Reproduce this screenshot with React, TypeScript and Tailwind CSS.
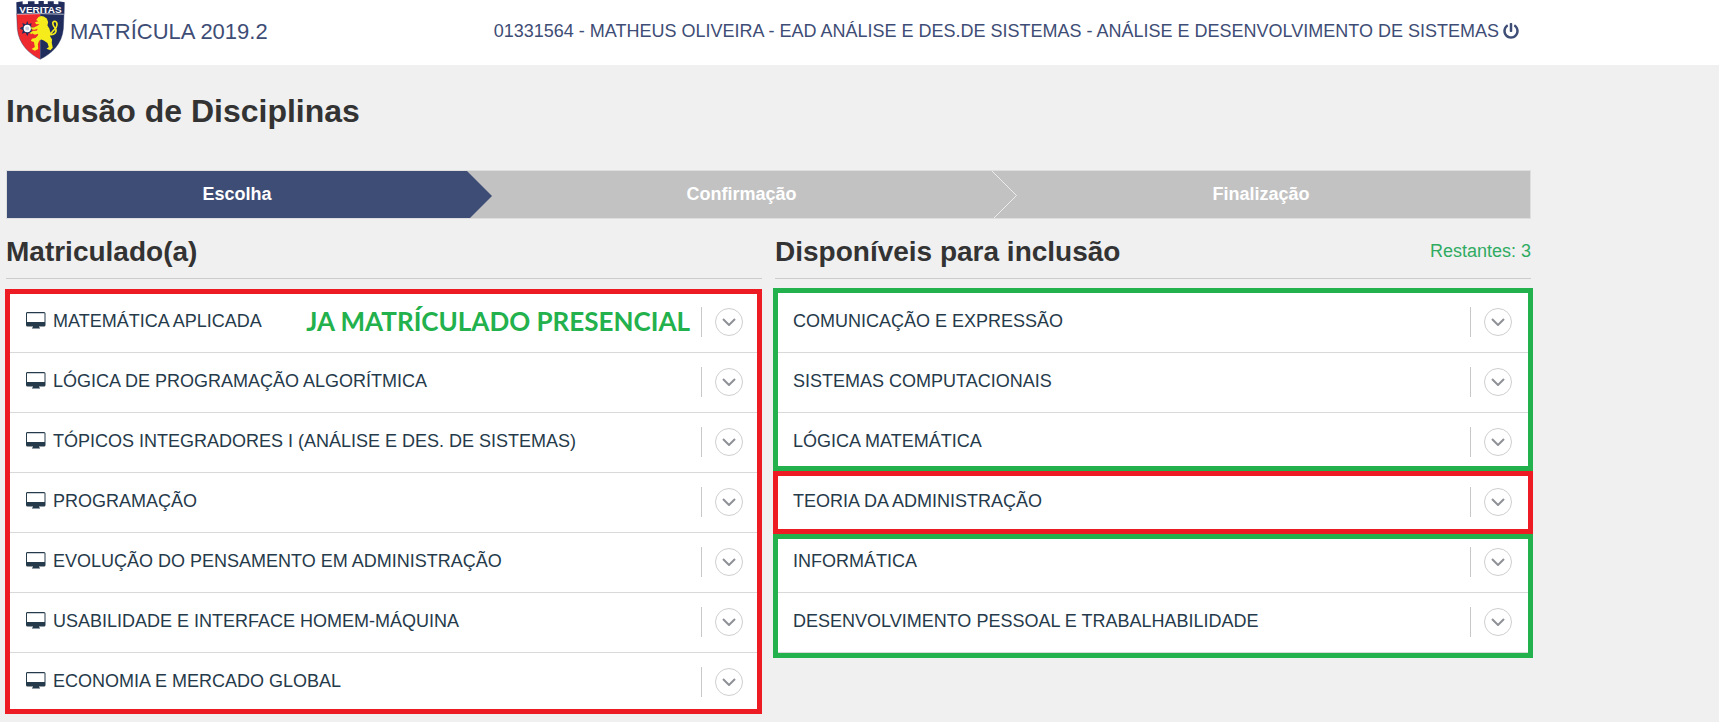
import { FaPowerOff } from "react-icons/fa";

type Frame = { color: string; place: string };
type Group = { frame: Frame; items: Course[] };
type Course = { name: string; online?: boolean; note?: string };

const RED = "border-[#ed1c24]";
const GREEN = "border-[#22b14c]";

const enrolled: Group[] = [
  {
    frame: { color: RED, place: "-top-1 -bottom-px -left-px right-0" },
    items: [
      { name: "MATEMÁTICA APLICADA", online: true, note: "JA MATRÍCULADO PRESENCIAL" },
      { name: "LÓGICA DE PROGRAMAÇÃO ALGORÍTMICA", online: true },
      { name: "TÓPICOS INTEGRADORES I (ANÁLISE E DES. DE SISTEMAS)", online: true },
      { name: "PROGRAMAÇÃO", online: true },
      { name: "EVOLUÇÃO DO PENSAMENTO EM ADMINISTRAÇÃO", online: true },
      { name: "USABILIDADE E INTERFACE HOMEM-MÁQUINA", online: true },
      { name: "ECONOMIA E MERCADO GLOBAL", online: true },
    ],
  },
];

const available: Group[] = [
  {
    frame: { color: GREEN, place: "-top-[5px] bottom-0.5 -inset-x-0.5" },
    items: [
      { name: "COMUNICAÇÃO E EXPRESSÃO" },
      { name: "SISTEMAS COMPUTACIONAIS" },
      { name: "LÓGICA MATEMÁTICA" },
    ],
  },
  {
    frame: { color: RED, place: "-top-0.5 -bottom-px -inset-x-0.5" },
    items: [{ name: "TEORIA DA ADMINISTRAÇÃO" }],
  },
  {
    frame: { color: GREEN, place: "top-px -bottom-[5px] -inset-x-0.5" },
    items: [{ name: "INFORMÁTICA" }, { name: "DESENVOLVIMENTO PESSOAL E TRABALHABILIDADE" }],
  },
];

function Shield() {
  return (
    <svg viewBox="0 0 148 178" className="h-[59px] w-[49px] shrink-0" aria-hidden="true">
      <path d="M2 38H73V176C40 160 8 130 4 84Z" fill="#ee2a2e" />
      <path d="M73 38H145L143 84C139 130 107 160 73 176Z" fill="#1f2c5c" />
      <path d="M2 40L1 4L20 1V10L36 9V1H56V9H68V0H84V9H96V1H114V9L128 10V1L147 4L146 40Q73 37 2 40Z" fill="#1f2c5c" />
      <path d="M2 40Q73 36 146 40" fill="none" stroke="#fff" strokeWidth="2" />
      <path d="M2 38L4 84C8 130 40 160 73 176C107 160 139 130 143 84L145 38" fill="none" stroke="#1f2c5c" strokeWidth="2" opacity=".6" />
      <text x="74" y="35" textAnchor="middle" fontSize="30" fontWeight="700" fill="#fff" fontFamily="Liberation Sans, sans-serif">
        VERITAS
      </text>
      <path
        d="M34 60L38 71L47 66L45 76L56 82L46 88L50 99L39 95L34 106L29 95L18 99L21 88L11 82L22 76L19 66L30 71Z"
        fill="#1f2c5c"
      />
      <circle cx="34" cy="83" r="11" fill="#fff" />
      <circle cx="34" cy="83" r="6" fill="#c9cede" />
      <path
        d="M61 57L68 48L76 45L84 47L93 53L97 63L95 74L101 84L104 96L103 106L109 116L108 126L111 141L104 149L92 144L99 139L95 127L84 119L76 116L70 120L66 130L67 145L57 150L47 145L57 139L54 124L45 121L48 114L59 112L66 104L67 99L57 102L50 98L44 100L43 94L53 90L62 90L66 84L56 87L48 86L44 79L54 80L65 75L71 69L61 70L57 64L67 61Z"
        fill="#f6ec1c"
      />
      <path d="M102 101C116 103 125 94 119 83C110 73 108 61 117 61C127 63 126 79 115 87C108 92 110 97 103 98" fill="none" stroke="#f6ec1c" strokeWidth="5" />
    </svg>
  );
}

function Monitor() {
  return (
    <svg viewBox="0 0 22 18" className="h-[18px] w-[22px] shrink-0" fill="#253a4a" aria-hidden="true">
      <path
        fillRule="evenodd"
        d="M3 1H20Q21.500 1 21.500 2.500V14Q21.500 15.500 20 15.500H15V16.500H16V17.500H8V16.500H9V15.500H3.500Q2 15.500 2 14V2.500Q2 1 3 1ZM3 2.200V11H20.500V2.200Z"
      />
    </svg>
  );
}

function Row({ course }: { course: Course }) {
  return (
    <li className="flex min-h-[60px] items-center border-b border-[#d9d9d9] bg-white pr-[19px] pb-0.5 pl-[18px]">
      {course.online && (
        <span className="mr-[7px] mb-1">
          <Monitor />
        </span>
      )}
      <span className="pb-0.5 leading-5">{course.name}</span>
      {course.note && (
        <strong className="ml-auto pr-[11px] pb-0.5 font-[Lato,sans-serif] text-[26px] leading-8 font-bold text-[#22b14c]">
          {course.note}
        </strong>
      )}
      <span className={`flex shrink-0 border-l border-[#c8c8c8] pl-[13px] ${course.note ? "" : "ml-auto"}`}>
        <button
          type="button"
          aria-label={`Detalhes de ${course.name}`}
          className="my-px flex size-7 items-center justify-center rounded-full border border-[#cfcfcf] bg-white"
        >
          <svg viewBox="0 0 14 8" className="h-2 w-3.5" fill="none" stroke="#8e9196" strokeWidth="2" aria-hidden="true">
            <path d="M1 1L7 7L13 1" />
          </svg>
        </button>
      </span>
    </li>
  );
}

function CourseList({ groups }: { groups: Group[] }) {
  return (
    <div className="mt-3.5">
      {groups.map((g) => (
        <div key={g.items[0].name} className="relative">
          <ul>
            {g.items.map((c) => (
              <Row key={c.name} course={c} />
            ))}
          </ul>
          <div className={`pointer-events-none absolute z-10 border-[5px] ${g.frame.color} ${g.frame.place}`} />
        </div>
      ))}
    </div>
  );
}

export default function App() {
  return (
    <div className="min-h-screen bg-[#f0f0f0] font-['Liberation_Sans',Arial,sans-serif] text-[18px] text-[#253a4a]">
      <header className="bg-white text-[#3e4d75]">
        <div className="flex h-[65px] max-w-[1519px] items-center justify-between pl-4">
          <div className="flex items-center gap-[5px] pb-1">
            <Shield />
            <span className="pt-0.5 text-[22px] leading-6">MATRÍCULA 2019.2</span>
          </div>
          <div className="flex items-center gap-1 pb-1">
            <span className="pt-0.5">
              01331564 - MATHEUS OLIVEIRA - EAD ANÁLISE E DES.DE SISTEMAS - ANÁLISE E DESENVOLVIMENTO DE SISTEMAS
            </span>
            <a href="#sair" aria-label="Sair">
              <FaPowerOff className="size-4" />
            </a>
          </div>
        </div>
      </header>

      <main className="max-w-[1537px] px-1.5 pb-2">
        <h1 className="pt-7 text-[32px] leading-9 font-bold text-[#333]">Inclusão de Disciplinas</h1>

        <ol className="mt-[41px] grid h-[49px] grid-cols-[460fr_525fr_538fr] border border-[#dedede] bg-[#c2c2c2] text-center leading-[46px] font-bold text-white">
          <li className="relative bg-[#3e4d75]">
            Escolha
            <svg viewBox="0 0 25 47" className="absolute top-0 left-full h-full w-[25px]" fill="#3e4d75" aria-hidden="true">
              <path d="M0 0L25 25L3 47H0Z" />
            </svg>
          </li>
          <li className="relative pl-6">
            Confirmação
            <svg viewBox="0 0 25 47" className="absolute top-0 left-full h-full w-[25px]" fill="none" stroke="#ececec" aria-hidden="true">
              <path d="M0 0L24.500 24.500L2 47" />
            </svg>
          </li>
          <li>Finalização</li>
        </ol>

        <div className="grid grid-cols-2 gap-[13px]">
          <section>
            <div className="flex h-[60px] items-center justify-between border-b border-[#cccccc] pt-1.5">
              <h2 className="text-[28px] leading-8 font-bold text-[#333]">Matriculado(a)</h2>
            </div>
            <CourseList groups={enrolled} />
          </section>
          <section>
            <div className="flex h-[60px] items-center justify-between border-b border-[#cccccc] pt-1.5">
              <h2 className="text-[28px] leading-8 font-bold text-[#333]">Disponíveis para inclusão</h2>
              <span className="text-[#2fab62]">Restantes: 3</span>
            </div>
            <CourseList groups={available} />
          </section>
        </div>
      </main>
    </div>
  );
}
